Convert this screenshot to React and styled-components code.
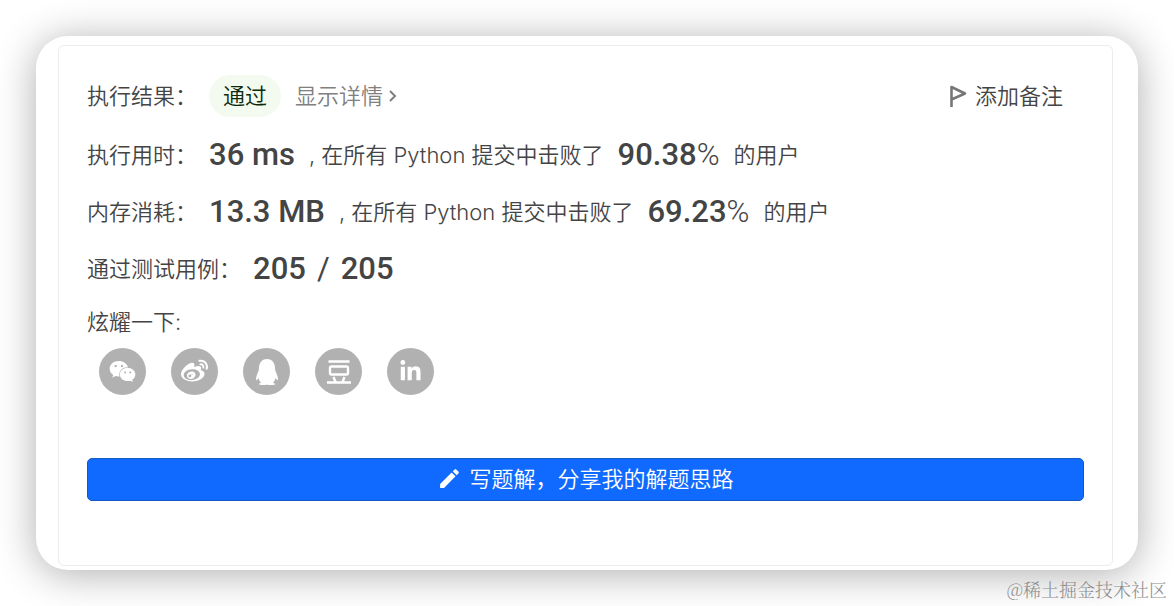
import React from "react";
import styled, { createGlobalStyle } from "styled-components";
import { FaWeixin, FaWeibo, FaQq, FaLinkedinIn } from "react-icons/fa";
import { MdEdit } from "react-icons/md";

const GlobalStyle = createGlobalStyle`
  * { box-sizing: border-box; }
  body {
    margin: 0;
    background: #fff;
    color: #444;
    font-family: Inter, "Noto Sans CJK SC", sans-serif;
    font-size: 22px;
    font-weight: 350;
    line-height: 32px;
  }
`;

const Page = styled.main`
  position: relative;
  padding: 36px;
`;

const Card = styled.section`
  padding: 9px 25px 4px 22px;
  border-radius: 32px;
  background: #fff;
  box-shadow: 0 4px 40px rgba(0, 0, 0, 0.32);
`;

const Panel = styled.div`
  padding: 20px 28px 64px;
  border: 1px solid #ececec;
  border-radius: 6px;
`;

const Row = styled.div`
  display: flex;
  align-items: center;
  height: ${(p) => (p.$tall ? 60 : 57)}px;
  white-space: pre;
`;

const Label = styled.span`
  padding-right: 12px;
`;

const Text = styled.span`
  padding: 0 14px;
`;

const Value = styled.strong`
  display: flex;
  gap: ${(p) => p.$gap || 0}px;
  font-family: Roboto, sans-serif;
  font-size: 31px;
  font-weight: 500;
`;

const Light = styled.span`
  font-weight: ${(p) => p.$weight || 300};
`;

const Badge = styled.span`
  padding: 5px 14px;
  border-radius: 22px;
  background: #f3faf0;
  color: #0b2b0b;
`;

const Details = styled.a`
  display: flex;
  align-items: center;
  gap: 4px;
  margin-left: 14px;
  color: #808080;
  text-decoration: none;
`;

const NoteButton = styled.button`
  display: flex;
  align-items: center;
  gap: 8px;
  margin-left: auto;
  padding: 0 21px 0 0;
  border: 0;
  background: none;
  color: #444;
  font: inherit;
  cursor: pointer;
`;

const Share = styled.div`
  padding-top: 9px;
`;

const ShareList = styled.nav`
  display: flex;
  gap: 25px;
  padding: 10px 12px 0;
`;

const ShareLink = styled.a`
  display: grid;
  place-items: center;
  width: 47px;
  height: 47px;
  border-radius: 50%;
  background: #b1b1b1;
  color: #fff;
`;

const WriteButton = styled.button`
  display: flex;
  align-items: center;
  justify-content: center;
  gap: 7px;
  width: 100%;
  height: 43px;
  margin-top: 63px;
  padding: 0 0 2px;
  border: 1px solid #1559c4;
  border-radius: 5px;
  background: #116aff;
  color: #fff;
  font: inherit;
  cursor: pointer;
`;

const Watermark = styled.span`
  position: absolute;
  right: 7px;
  bottom: 5px;
  color: #8c8c8c;
  font-family: "Noto Serif CJK SC", "Liberation Serif", "Noto Sans CJK SC", serif;
  font-size: 18px;
  line-height: 24px;
`;

const Chevron = () => (
  <svg width="12" height="14" viewBox="0 0 12 14" fill="none" stroke="currentColor" strokeWidth="2" aria-hidden="true">
    <path d="M3 2 8 7 3 12" />
  </svg>
);

const Flag = () => (
  <svg width="18" height="22" viewBox="0 0 18 22" fill="none" stroke="#777" strokeWidth="2.6" strokeLinejoin="round" aria-hidden="true">
    <path d="M2.500 22V2L16 8.500 2.500 14.500" />
  </svg>
);

const Douban = () => (
  <svg width="24" height="24" viewBox="0 0 24 24" fill="none" stroke="currentColor" strokeWidth="2.400" aria-hidden="true">
    <path d="M1.500 1.500h21M0 22.500h24M6.500 17l2 5M17.500 17l-2 5" />
    <rect x="3" y="6.500" width="18" height="8" rx="1.500" />
  </svg>
);

const networks = [
  ["微信", <FaWeixin size={27} />],
  ["微博", <FaWeibo size={27} />],
  ["QQ", <FaQq size={26} />],
  ["豆瓣", <Douban />],
  ["LinkedIn", <FaLinkedinIn size={23} />],
];

function Metric({ label, value, percent }) {
  return (
    <Row>
      <Label>{label}</Label>
      <Value>{value}</Value>
      <Text>, 在所有 Python 提交中击败了</Text>
      <Value>
        {percent}
        <Light>%</Light>
      </Value>
      <Text>的用户</Text>
    </Row>
  );
}

export default function App() {
  return (
    <>
      <GlobalStyle />
      <Page>
        <Card>
          <Panel>
            <Row $tall>
              <Label>执行结果：</Label>
              <Badge>通过</Badge>
              <Details href="#details">显示详情<Chevron /></Details>
              <NoteButton type="button"><Flag />添加备注</NoteButton>
            </Row>
            <Metric label="执行用时：" value="36 ms" percent="90.38" />
            <Metric label="内存消耗：" value="13.3 MB" percent="69.23" />
            <Row>
              <Label>通过测试用例：</Label>
              <Value $gap={11}>
                <span>205</span>
                <Light $weight={400}>/</Light>
                <span>205</span>
              </Value>
            </Row>
            <Share>
              <Label>炫耀一下:</Label>
              <ShareList>
                {networks.map(([name, icon]) => (
                  <ShareLink key={name} href="#share" aria-label={name}>{icon}</ShareLink>
                ))}
              </ShareList>
            </Share>
            <WriteButton type="button"><MdEdit size={25} />写题解，分享我的解题思路</WriteButton>
          </Panel>
        </Card>
        <Watermark>@稀土掘金技术社区</Watermark>
      </Page>
    </>
  );
}
